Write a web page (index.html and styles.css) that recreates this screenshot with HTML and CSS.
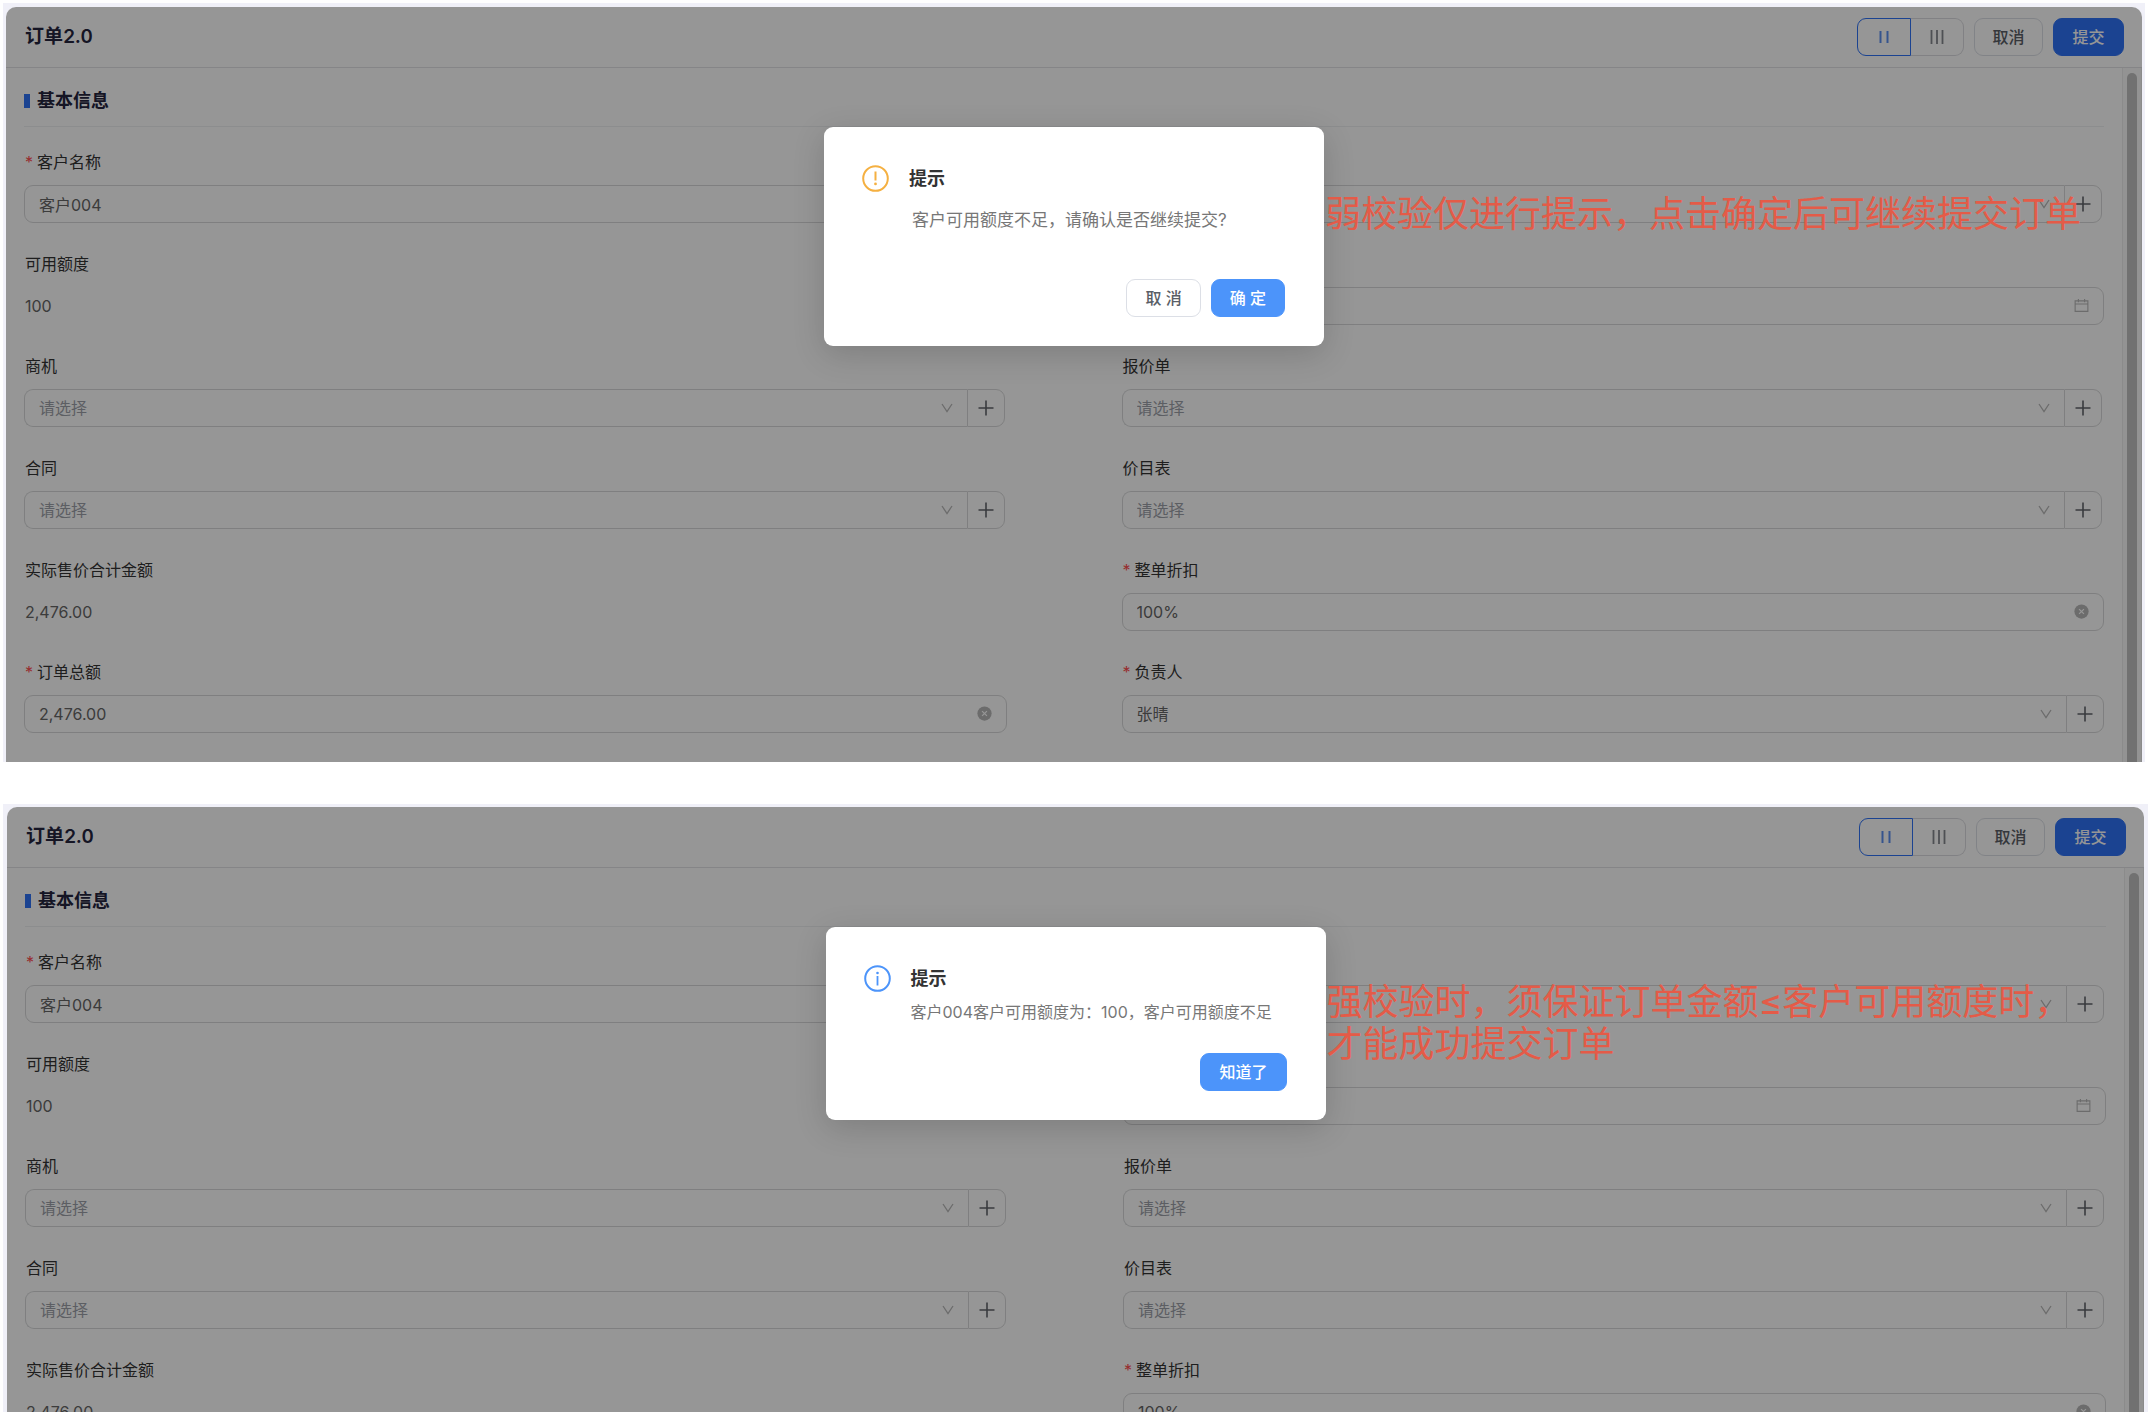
FILE: index.html
```html
<!DOCTYPE html>
<html lang="zh-CN">
<head>
<meta charset="utf-8">
<meta name="viewport" content="width=device-width, initial-scale=1">
<title>订单2.0</title>
<link rel="stylesheet" href="styles.css">
</head>
<body>
<svg class="sprite" aria-hidden="true">
  <symbol id="chevron" viewBox="0 0 12 10"><path d="M1 1l5 7.5L11 1" fill="none" stroke="currentColor" stroke-width="1.3"/></symbol>
  <symbol id="plus" viewBox="0 0 16 16"><path d="M8 .5v15M.5 8h15" fill="none" stroke="currentColor" stroke-width="1.6"/></symbol>
  <symbol id="calendar" viewBox="0 0 16 16"><path d="M1.2 3h13.6v11.3H1.2zM1.2 6.4h13.6M4.7 1v3.4M11.3 1v3.4" fill="none" stroke="currentColor" stroke-width="1.2"/></symbol>
  <symbol id="clear" viewBox="0 0 16 16"><circle cx="8" cy="8" r="7.6" fill="currentColor"/><path d="M5.4 5.4l5.2 5.2M10.6 5.4l-5.2 5.2" stroke="#fff" stroke-width="1.3"/></symbol>
  <symbol id="cols2" viewBox="0 0 16 16"><path d="M4.5 2v12M11.5 2v12" stroke="currentColor" stroke-width="2"/></symbol>
  <symbol id="cols3" viewBox="0 0 16 16"><path d="M2.5 1v14M8 1v14M13.5 1v14" stroke="currentColor" stroke-width="1.8"/></symbol>
</svg>
<main class="page">

  <section class="window window-weak">
    <div class="panel">
      <header class="topbar">
        <h1 class="title">订单2.0</h1>
        <div class="actions">
          <div class="segment">
            <button type="button" class="seg seg-on" aria-label="两列"><svg class="icon"><use href="#cols2"/></svg></button>
            <button type="button" class="seg" aria-label="三列"><svg class="icon"><use href="#cols3"/></svg></button>
          </div>
          <button type="button" class="btn">取消</button>
          <button type="button" class="btn btn-submit">提交</button>
        </div>
      </header>
      <div class="body">
        <form class="form">
          <h2 class="section-title">基本信息</h2>
          <div class="grid">
            <div class="field">
              <label class="label required" for="a-customer">客户名称</label>
              <input class="input" id="a-customer" value="客户004">
            </div>
            <div class="field">
              <div class="combo">
                <select class="select" aria-label="选择"><option></option></select>
                <svg class="chevron"><use href="#chevron"/></svg>
                <button type="button" class="add" aria-label="新增"><svg class="icon"><use href="#plus"/></svg></button>
              </div>
            </div>
            <div class="field">
              <span class="label">可用额度</span>
              <output class="value">100</output>
            </div>
            <div class="field">
              <div class="affix">
                <input class="input" aria-label="日期">
                <svg class="suffix"><use href="#calendar"/></svg>
              </div>
            </div>
            <div class="field">
              <label class="label" for="a-chance">商机</label>
              <div class="combo">
                <select class="select empty" id="a-chance"><option>请选择</option></select>
                <svg class="chevron"><use href="#chevron"/></svg>
                <button type="button" class="add" aria-label="新增商机"><svg class="icon"><use href="#plus"/></svg></button>
              </div>
            </div>
            <div class="field">
              <label class="label" for="a-quote">报价单</label>
              <div class="combo">
                <select class="select empty" id="a-quote"><option>请选择</option></select>
                <svg class="chevron"><use href="#chevron"/></svg>
                <button type="button" class="add" aria-label="新增报价单"><svg class="icon"><use href="#plus"/></svg></button>
              </div>
            </div>
            <div class="field">
              <label class="label" for="a-contract">合同</label>
              <div class="combo">
                <select class="select empty" id="a-contract"><option>请选择</option></select>
                <svg class="chevron"><use href="#chevron"/></svg>
                <button type="button" class="add" aria-label="新增合同"><svg class="icon"><use href="#plus"/></svg></button>
              </div>
            </div>
            <div class="field">
              <label class="label" for="a-price">价目表</label>
              <div class="combo">
                <select class="select empty" id="a-price"><option>请选择</option></select>
                <svg class="chevron"><use href="#chevron"/></svg>
                <button type="button" class="add" aria-label="新增价目表"><svg class="icon"><use href="#plus"/></svg></button>
              </div>
            </div>
            <div class="field">
              <span class="label">实际售价合计金额</span>
              <output class="value">2,476.00</output>
            </div>
            <div class="field">
              <label class="label required" for="a-discount">整单折扣</label>
              <div class="affix">
                <input class="input" id="a-discount" value="100%">
                <svg class="suffix"><use href="#clear"/></svg>
              </div>
            </div>
            <div class="field">
              <label class="label required" for="a-total">订单总额</label>
              <div class="affix">
                <input class="input" id="a-total" value="2,476.00">
                <svg class="suffix"><use href="#clear"/></svg>
              </div>
            </div>
            <div class="field">
              <label class="label required" for="a-owner">负责人</label>
              <div class="combo combo-full">
                <select class="select" id="a-owner"><option>张晴</option></select>
                <svg class="chevron"><use href="#chevron"/></svg>
                <button type="button" class="add" aria-label="新增负责人"><svg class="icon"><use href="#plus"/></svg></button>
              </div>
            </div>
          </div>
        </form>
        <div class="track"><div class="thumb"></div></div>
      </div>
      <div class="mask"></div>
      <div class="modal" role="dialog" aria-labelledby="a-modal">
        <svg class="modal-icon warn" viewBox="0 0 27 27" aria-hidden="true"><circle cx="13.5" cy="13.5" r="12.3" fill="none" stroke="currentColor" stroke-width="2"/><path d="M13.5 6.5v9" stroke="currentColor" stroke-width="2"/><circle cx="13.5" cy="18.9" r="1.4" fill="currentColor"/></svg>
        <h3 class="modal-title" id="a-modal">提示</h3>
        <p class="modal-text modal-text-lg">客户可用额度不足，请确认是否继续提交?</p>
        <div class="modal-actions">
          <button type="button" class="btn btn-modal">取 消</button>
          <button type="button" class="btn btn-modal btn-primary">确 定</button>
        </div>
      </div>
      <p class="note note-weak">弱校验仅进行提示，点击确定后可继续提交订单</p>
    </div>
  </section>

  <section class="window window-strong">
    <div class="panel">
      <header class="topbar">
        <h1 class="title">订单2.0</h1>
        <div class="actions">
          <div class="segment">
            <button type="button" class="seg seg-on" aria-label="两列"><svg class="icon"><use href="#cols2"/></svg></button>
            <button type="button" class="seg" aria-label="三列"><svg class="icon"><use href="#cols3"/></svg></button>
          </div>
          <button type="button" class="btn">取消</button>
          <button type="button" class="btn btn-submit">提交</button>
        </div>
      </header>
      <div class="body">
        <form class="form">
          <h2 class="section-title">基本信息</h2>
          <div class="grid">
            <div class="field">
              <label class="label required" for="b-customer">客户名称</label>
              <input class="input" id="b-customer" value="客户004">
            </div>
            <div class="field">
              <div class="combo">
                <select class="select" aria-label="选择"><option></option></select>
                <svg class="chevron"><use href="#chevron"/></svg>
                <button type="button" class="add" aria-label="新增"><svg class="icon"><use href="#plus"/></svg></button>
              </div>
            </div>
            <div class="field">
              <span class="label">可用额度</span>
              <output class="value">100</output>
            </div>
            <div class="field">
              <div class="affix">
                <input class="input" aria-label="日期">
                <svg class="suffix"><use href="#calendar"/></svg>
              </div>
            </div>
            <div class="field">
              <label class="label" for="b-chance">商机</label>
              <div class="combo">
                <select class="select empty" id="b-chance"><option>请选择</option></select>
                <svg class="chevron"><use href="#chevron"/></svg>
                <button type="button" class="add" aria-label="新增商机"><svg class="icon"><use href="#plus"/></svg></button>
              </div>
            </div>
            <div class="field">
              <label class="label" for="b-quote">报价单</label>
              <div class="combo">
                <select class="select empty" id="b-quote"><option>请选择</option></select>
                <svg class="chevron"><use href="#chevron"/></svg>
                <button type="button" class="add" aria-label="新增报价单"><svg class="icon"><use href="#plus"/></svg></button>
              </div>
            </div>
            <div class="field">
              <label class="label" for="b-contract">合同</label>
              <div class="combo">
                <select class="select empty" id="b-contract"><option>请选择</option></select>
                <svg class="chevron"><use href="#chevron"/></svg>
                <button type="button" class="add" aria-label="新增合同"><svg class="icon"><use href="#plus"/></svg></button>
              </div>
            </div>
            <div class="field">
              <label class="label" for="b-price">价目表</label>
              <div class="combo">
                <select class="select empty" id="b-price"><option>请选择</option></select>
                <svg class="chevron"><use href="#chevron"/></svg>
                <button type="button" class="add" aria-label="新增价目表"><svg class="icon"><use href="#plus"/></svg></button>
              </div>
            </div>
            <div class="field">
              <span class="label">实际售价合计金额</span>
              <output class="value">2,476.00</output>
            </div>
            <div class="field">
              <label class="label required" for="b-discount">整单折扣</label>
              <div class="affix">
                <input class="input" id="b-discount" value="100%">
                <svg class="suffix"><use href="#clear"/></svg>
              </div>
            </div>
          </div>
        </form>
        <div class="track"><div class="thumb"></div></div>
      </div>
      <div class="mask"></div>
      <div class="modal" role="dialog" aria-labelledby="b-modal">
        <svg class="modal-icon info" viewBox="0 0 27 27" aria-hidden="true"><circle cx="13.5" cy="13.5" r="12.3" fill="none" stroke="currentColor" stroke-width="2"/><path d="M13.5 11v9.5" stroke="currentColor" stroke-width="1.8"/><circle cx="13.5" cy="8" r="1.3" fill="currentColor"/></svg>
        <h3 class="modal-title" id="b-modal">提示</h3>
        <p class="modal-text">客户004客户可用额度为：100，客户可用额度不足</p>
        <div class="modal-actions">
          <button type="button" class="btn btn-modal btn-primary">知道了</button>
        </div>
      </div>
      <p class="note note-strong">强校验时，须保证订单金额≤客户可用额度时，<br>才能成功提交订单</p>
    </div>
  </section>

</main>
</body>
</html>
```
FILE: styles.css
```css
* { box-sizing: border-box; }

body {
  margin: 0;
  background: #fff;
  color: #333;
  font: 16px/24px Inter, "Noto Sans CJK SC", sans-serif;
}

h1, h2, h3, p { margin: 0; }
button, input, select { font: inherit; margin: 0; }
.sprite { position: absolute; width: 0; height: 0; }

.page {
  display: flex;
  flex-direction: column;
  gap: 42px;
  height: 100vh;
  padding: 3px 2px 6px 3px;
}

.window { background: #f0f0f8; }
.window-weak { flex: none; margin-right: 3px; padding: 4px 3px 0; }
.window-strong { flex: 1; min-height: 0; overflow: hidden; padding: 3px 4px 0; }

.panel {
  position: relative;
  overflow: hidden;
  background: #fff;
  border-radius: 10px 10px 0 0;
}
.window-strong .panel { height: 100%; }

/* Top bar */
.topbar {
  display: flex;
  align-items: center;
  justify-content: space-between;
  height: 61px;
  padding: 0 18px 0 19px;
  border-bottom: 1px solid #e2e2e5;
}
.title {
  color: #24243e;
  font-size: 19px;
  font-weight: 600;
  font-variant-numeric: tabular-nums;
  line-height: 24px;
}
.actions { display: flex; gap: 10px; }

.segment { display: flex; }
.seg {
  display: grid;
  place-items: center;
  width: 53px;
  height: 38px;
  padding: 0;
  background: #fff;
  border: 1px solid #dcdce0;
  border-left: 0;
  border-radius: 0 9px 9px 0;
  color: #85888f;
}
.seg-on {
  width: 54px;
  border: 1px solid #2e72f6;
  border-radius: 9px 0 0 9px;
  color: #5b8ff0;
}
.icon { display: block; width: 16px; height: 16px; }

.btn {
  height: 38px;
  width: 69px;
  padding: 0;
  background: #fff;
  border: 1px solid #dcdfe6;
  border-radius: 9px;
  color: #5a5e66;
  font-weight: 500;
  line-height: 24px;
}
.btn-submit { width: 71px; background: #2e72f6; border-color: #2e72f6; color: #fff; }

/* Form */
.body { display: flex; }
.form { flex: 1; min-width: 0; padding: 0 18px 29px 18px; }

.section-title {
  display: flex;
  align-items: center;
  gap: 7px;
  padding: 21px 0 13px;
  border-bottom: 1px solid #eff0f2;
  color: #24243e;
  font-size: 18px;
  font-weight: 600;
  line-height: 24px;
}
.section-title::before { content: ""; width: 6px; height: 14px; background: #2e72f6; }

.grid {
  display: grid;
  grid-template-columns: 1fr 1fr;
  gap: 29px 115px;
  padding-top: 23px;
}
.field {
  display: flex;
  flex-direction: column;
  justify-content: flex-end;
  gap: 11px;
}
.label { padding-left: 1px; }
.required { display: flex; gap: 4px; }
.required::before { content: "*"; color: #ff4d4f; }

.value { height: 38px; padding-left: 1px; color: #666; line-height: 38px; }

.input {
  width: 100%;
  height: 38px;
  padding: 0 14px;
  background: transparent;
  border: 1px solid #d8d9da;
  border-radius: 9px;
  color: #666;
}
.affix { position: relative; }
.suffix {
  position: absolute;
  top: 11px;
  right: 15px;
  width: 15px;
  height: 15px;
  color: #b8b8b8;
}

.combo { position: relative; display: flex; margin-right: 2px; }
.combo-full { margin-right: 0; }
.select {
  flex: 1;
  min-width: 0;
  height: 38px;
  padding: 0 14px;
  appearance: none;
  background: transparent;
  border: 1px solid #d8d9da;
  border-right: 0;
  border-radius: 9px 0 0 9px;
  color: #666;
}
.empty { color: #9da1a9; }
.chevron {
  position: absolute;
  top: 14px;
  right: 52px;
  width: 12px;
  height: 10px;
  color: #b8b8b8;
}
.add {
  display: grid;
  place-items: center;
  width: 38px;
  height: 38px;
  padding: 0;
  background: #fff;
  border: 1px solid #d8d9da;
  border-radius: 0 9px 9px 0;
  color: #62656b;
}

/* Scrollbar */
.track {
  display: flex;
  width: 20px;
  padding: 5px 4px 0;
  background: #fafafa;
  border: 1px solid #ececec;
  border-width: 0 1px;
}
.thumb { flex: 1; background: #c1c1c1; border-radius: 5px 5px 0 0; }

.mask { position: absolute; inset: 0; background: rgba(0, 0, 0, 0.41); }

/* Dialog */
.modal {
  position: absolute;
  top: 120px;
  left: 50%;
  display: grid;
  grid-template-columns: 27px 1fr;
  column-gap: 20px;
  width: 500px;
  margin-left: -250px;
  padding: 38px 39px 29px 38px;
  background: #fff;
  border-radius: 9px;
  box-shadow: 0 8px 32px rgba(0, 0, 0, 0.16);
}
.modal-icon { width: 27px; height: 27px; }
.warn { color: #f5b041; }
.info { color: #4c94fa; }
.modal-title { font-size: 18px; font-weight: 600; line-height: 28px; }
.modal-text { grid-column: 2; padding-top: 7px; color: #777; line-height: 24px; }
.modal-text-lg { padding: 15px 0 0 3px; font-size: 17px; }
.modal-actions {
  grid-column: 1 / -1;
  display: flex;
  justify-content: flex-end;
  gap: 10px;
  padding-top: 29px;
}
.modal-text-lg + .modal-actions { padding-top: 47px; }
.btn-modal { width: auto; padding: 0 18px; }
.btn-primary { background: #4c94fa; border-color: #4c94fa; color: #fff; }

/* Red remarks beside the dialogs */
.note {
  position: absolute;
  left: 50%;
  margin-left: 251px;
  color: #e45b48;
  font-size: 36px;
  line-height: 42px;
  white-space: nowrap;
}
.note-weak { top: 186px; }
.note-strong { top: 174px; }
```
